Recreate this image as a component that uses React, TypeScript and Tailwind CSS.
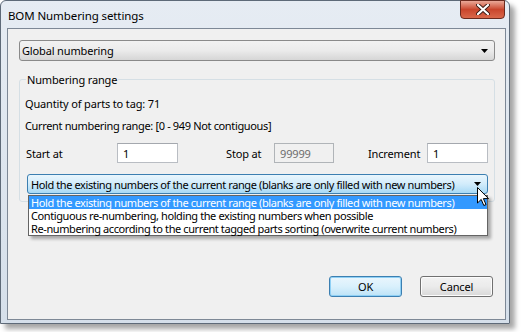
import React from "react";

const font = "font-['Noto_Sans',sans-serif]";

function Arrow() {
  return (
    <svg width="7" height="4" viewBox="0 0 7 4" className="block shrink-0">
      <path d="M0 0 H7 L3.5 4 Z" fill="#000" />
    </svg>
  );
}

export default function App() {
  return (
    <div className={`relative w-[521px] h-[332px] bg-white ${font} text-[11px] tracking-[-0.15px] leading-[15px] text-black`}>
      {/* window */}
      <div className="w-[510px] h-[324px] border border-[#5e6a78] rounded-t-[6px] bg-gradient-to-b from-[#e6ecf3] to-[#d5dfea] shadow-[5px_5px_5px_rgba(0,0,0,0.35)] flex flex-col">
        {/* title bar */}
        <div className="h-[27px] flex justify-between items-start">
          <div className="pl-[7px] pt-[7px] text-[11.5px] tracking-[-0.1px] leading-[15px] text-black">BOM Numbering settings</div>
          <div className="-mt-px mr-[4px] w-[45px] h-[19px] rounded-b-[4px] border border-[#6b2a1e] bg-gradient-to-b from-[#e9a898] via-[#c9452c] to-[#d9674a] flex items-center justify-center">
            <svg width="14" height="11" viewBox="0 0 14 11">
              <path d="M2 1 L12 10 M12 1 L2 10" stroke="#3a1a14" strokeWidth="4" strokeLinecap="round" />
              <path d="M2 1 L12 10 M12 1 L2 10" stroke="#fff" strokeWidth="2.2" strokeLinecap="round" />
            </svg>
          </div>
        </div>
        {/* client */}
        <div className="ml-[6px] w-[499px] h-[292px] border border-[#7d8896] bg-[#f0f0f0] flex flex-col">
          {/* select */}
          <div className="ml-[11px] mt-[11px] w-[476px] h-[21px] border border-[#8a8a8a] rounded-[3px] bg-gradient-to-b from-[#f2f2f2] via-[#ebebeb] to-[#d6d6d6] flex items-center justify-between pl-[2px] pr-[6px]">
            <span>Global numbering</span>
            <Arrow />
          </div>
          {/* group */}
          <div className="relative ml-[11px] mt-[18px] w-[476px] border border-[#d5dfe5] rounded-[3px] pt-[16px] pb-[7px]">
            <span className="absolute left-[6px] -top-[8px] px-[1px] bg-[#f0f0f0]">Numbering range</span>
            <div className="pl-[5px]">Quantity of parts to tag: 71</div>
            <div className="pl-[5px] mt-[7px] tracking-[-0.35px]">Current numbering range: [0 - 949 Not contiguous]</div>
            <div className="mt-[10px] pl-[6px] flex items-center h-[20px]">
              <span className="w-[91px]">Start at</span>
              <div className="w-[61px] h-[20px] bg-white border border-[#b9bdc3] border-t-[#a4a8ae] flex items-center pl-[5px]">1</div>
              <span className="ml-[48px] w-[48px]">Stop at</span>
              <div className="w-[60px] h-[20px] bg-[#f0f0f0] border border-[#b0b4b8] flex items-center pl-[5px] text-[#6d6d6d]">99999</div>
              <span className="ml-[34px] w-[59px]">Increment</span>
              <div className="w-[61px] h-[20px] bg-white border border-[#b9bdc3] border-t-[#a4a8ae] flex items-center pl-[5px]">1</div>
            </div>
            <div className="relative mt-[11px] ml-[7px] w-[461px] h-[20px] tracking-[-0.4px]">
              <div className="h-full border border-[#3c7fb1] rounded-[3px] bg-gradient-to-b from-[#eaf6fd] via-[#d2ecfb] to-[#a7d9f5] flex items-center justify-between pl-[3px] pr-[6px]">
                <span className="whitespace-nowrap">Hold the existing numbers of the current range (blanks are only filled with new numbers)</span>
                <Arrow />
              </div>
              <div className="absolute left-[1px] top-[calc(100%+1px)] w-[460px] border border-[#646464] bg-white shadow-[3px_3px_3px_rgba(0,0,0,0.3)] z-10">
                <div className="h-[13px] leading-[13px] bg-[#3399ff] text-white pl-[2px] whitespace-nowrap">Hold the existing numbers of the current range (blanks are only filled with new numbers)</div>
                <div className="h-[13px] leading-[13px] pl-[2px] whitespace-nowrap">Contiguous re-numbering, holding the existing numbers when possible</div>
                <div className="h-[13px] leading-[13px] pl-[2px] whitespace-nowrap">Re-numbering according to the current tagged parts sorting (overwrite current numbers)</div>
              </div>
            </div>
          </div>
          {/* buttons */}
          <div className="mt-[74px] flex justify-end gap-[18px] pr-[12px]">
            <div className="w-[73px] h-[21px] rounded-[3px] border border-[#3c7fb1] bg-gradient-to-b from-[#eaf6fd] via-[#d9f0fc] to-[#bde3f7] shadow-[inset_0_0_0_1px_#8fd0f5] flex items-center justify-center">OK</div>
            <div className="w-[73px] h-[21px] rounded-[3px] border border-[#707070] bg-gradient-to-b from-[#f2f2f2] via-[#ebebeb] to-[#d8d8d8] shadow-[inset_0_0_0_1px_#fcfcfc] flex items-center justify-center">Cancel</div>
          </div>
        </div>
      </div>
      {/* mouse cursor */}
      <svg className="absolute left-[477px] top-[187px] z-20" width="13" height="20" viewBox="0 0 13 20">
        <path d="M0.5 0.5 L0.5 16 L4.2 12.4 L6.8 18.5 L9 17.6 L6.4 11.6 L11.5 11.6 Z" fill="#fff" stroke="#000" strokeWidth="1" strokeLinejoin="round" />
      </svg>
    </div>
  );
}
